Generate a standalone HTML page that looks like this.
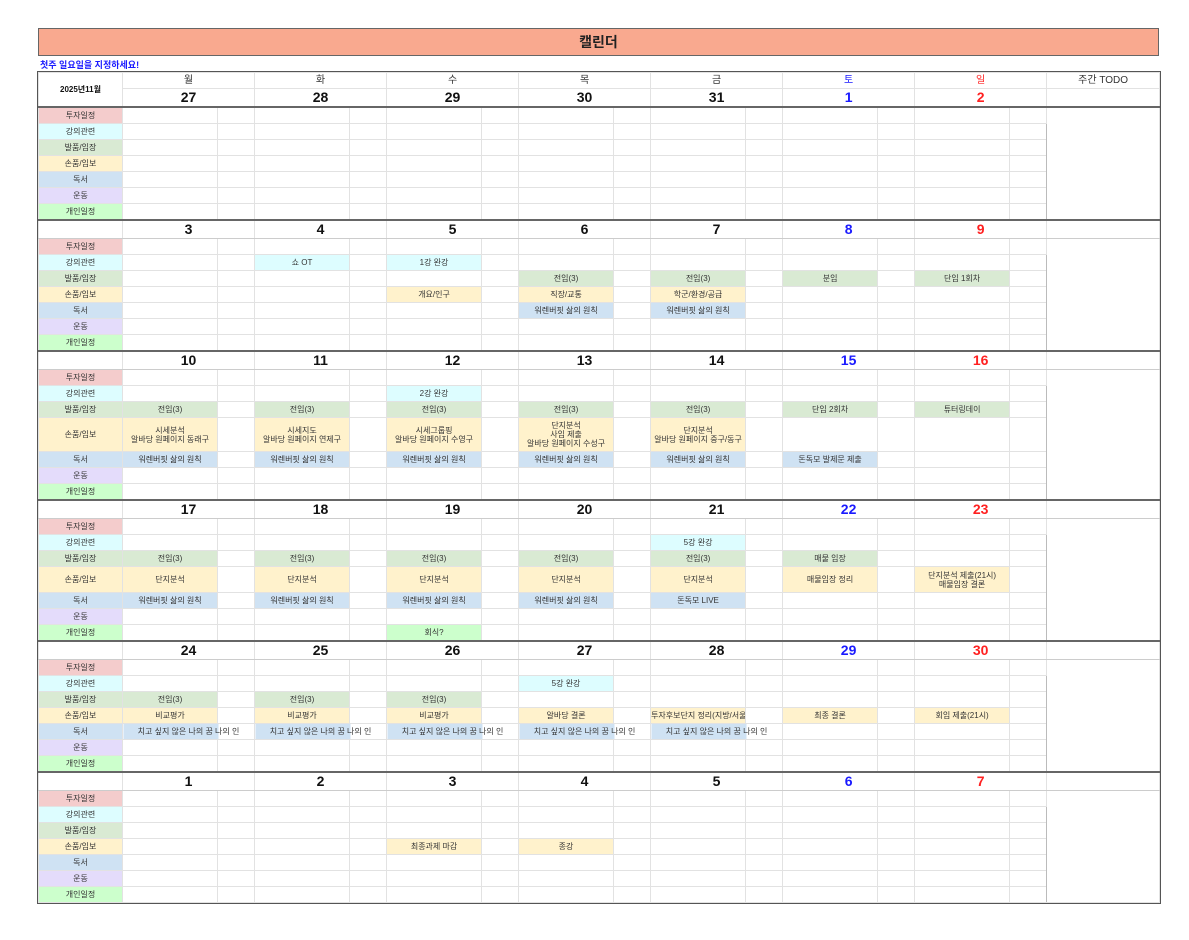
<!DOCTYPE html>
<html><head><meta charset="utf-8"><style>
body{margin:0;background:#fff;font-family:"Liberation Sans","Noto Sans CJK KR",sans-serif;width:1189px;height:940px;position:relative;overflow:hidden}
.title{position:absolute;left:38px;top:28px;width:1119px;height:26px;background:#f9a98f;border:1px solid #666;text-align:center;font-size:14px;font-weight:bold;line-height:26px;color:#222}
.sub{position:absolute;left:40px;top:58px;font-size:9px;font-weight:bold;color:#1a1aff}
table{position:absolute;left:38px;top:72px;border-collapse:collapse;table-layout:fixed;width:1121px;outline:1px solid #555}
td{border:1px solid #e2e2e2;padding:0;font-size:8px;line-height:9px;text-align:center;color:#333;overflow:hidden;white-space:nowrap;height:15px}
tr.d td{height:17px;font-size:14px;font-weight:bold;color:#111;border-top:2px solid #666;border-bottom:1px solid #ccc}
tr.h td{height:15px;font-size:10px;color:#333}
.b{color:#1a1aff!important}.r{color:#ff2020!important}
.a1{background:#f4cccc}.a2{background:#ddfdff}.a3{background:#d9ead3}.a4{background:#fff2cc}.a5{background:#cfe2f3}.a6{background:#e4dcfb}.a7{background:#ccffcc}
.todo{border-left:1px solid #bbb}
</style></head><body>
<div class="title">캘린더</div>
<div class="sub">첫주 일요일을 지정하세요!</div>
<table>
<colgroup><col style="width:84px"><col style="width:95px"><col style="width:37px"><col style="width:95px"><col style="width:37px"><col style="width:95px"><col style="width:37px"><col style="width:95px"><col style="width:37px"><col style="width:95px"><col style="width:37px"><col style="width:95px"><col style="width:37px"><col style="width:95px"><col style="width:37px"><col style="width:113px"></colgroup>
<tr class="h"><td rowspan="2" style="font-weight:bold;font-size:8px;color:#111">2025년11월</td><td colspan="2">월</td><td colspan="2">화</td><td colspan="2">수</td><td colspan="2">목</td><td colspan="2">금</td><td colspan="2" class="b">토</td><td colspan="2" class="r">일</td><td>주간 TODO</td></tr>
<tr class="d"><td colspan="2" style="border-top:1px solid #e2e2e2">27</td><td colspan="2" style="border-top:1px solid #e2e2e2">28</td><td colspan="2" style="border-top:1px solid #e2e2e2">29</td><td colspan="2" style="border-top:1px solid #e2e2e2">30</td><td colspan="2" style="border-top:1px solid #e2e2e2">31</td><td colspan="2" class="b" style="border-top:1px solid #e2e2e2">1</td><td colspan="2" class="r" style="border-top:1px solid #e2e2e2">2</td><td style="border-top:1px solid #e2e2e2"></td></tr>
<!-- week1 -->
<tr style="border-top:2px solid #666"><td class="a1">투자일정</td><td></td><td></td><td></td><td></td><td></td><td></td><td></td><td></td><td></td><td></td><td></td><td></td><td></td><td></td><td rowspan="7" class="todo"></td></tr>
<tr><td class="a2">강의관련</td><td></td><td></td><td></td><td></td><td></td><td></td><td></td><td></td><td></td><td></td><td></td><td></td><td></td><td></td></tr>
<tr><td class="a3">발품/임장</td><td></td><td></td><td></td><td></td><td></td><td></td><td></td><td></td><td></td><td></td><td></td><td></td><td></td><td></td></tr>
<tr><td class="a4">손품/임보</td><td></td><td></td><td></td><td></td><td></td><td></td><td></td><td></td><td></td><td></td><td></td><td></td><td></td><td></td></tr>
<tr><td class="a5">독서</td><td></td><td></td><td></td><td></td><td></td><td></td><td></td><td></td><td></td><td></td><td></td><td></td><td></td><td></td></tr>
<tr><td class="a6">운동</td><td></td><td></td><td></td><td></td><td></td><td></td><td></td><td></td><td></td><td></td><td></td><td></td><td></td><td></td></tr>
<tr><td class="a7">개인일정</td><td></td><td></td><td></td><td></td><td></td><td></td><td></td><td></td><td></td><td></td><td></td><td></td><td></td><td></td></tr>
<!-- week2 -->
<tr class="d"><td></td><td colspan="2">3</td><td colspan="2">4</td><td colspan="2">5</td><td colspan="2">6</td><td colspan="2">7</td><td colspan="2" class="b">8</td><td colspan="2" class="r">9</td><td></td></tr>
<tr><td class="a1">투자일정</td><td></td><td></td><td></td><td></td><td></td><td></td><td></td><td></td><td></td><td></td><td></td><td></td><td></td><td></td><td rowspan="7" class="todo"></td></tr>
<tr><td class="a2">강의관련</td><td></td><td></td><td class="a2">쇼 OT</td><td></td><td class="a2">1강 완강</td><td></td><td></td><td></td><td></td><td></td><td></td><td></td><td></td><td></td></tr>
<tr><td class="a3">발품/임장</td><td></td><td></td><td></td><td></td><td></td><td></td><td class="a3">전임(3)</td><td></td><td class="a3">전임(3)</td><td></td><td class="a3">분임</td><td></td><td class="a3">단임 1회차</td><td></td></tr>
<tr><td class="a4">손품/임보</td><td></td><td></td><td></td><td></td><td class="a4">개요/인구</td><td></td><td class="a4">직장/교통</td><td></td><td class="a4">학군/환경/공급</td><td></td><td></td><td></td><td></td><td></td></tr>
<tr><td class="a5">독서</td><td></td><td></td><td></td><td></td><td></td><td></td><td class="a5">워렌버핏 삶의 원칙</td><td></td><td class="a5">워렌버핏 삶의 원칙</td><td></td><td></td><td></td><td></td><td></td></tr>
<tr><td class="a6">운동</td><td></td><td></td><td></td><td></td><td></td><td></td><td></td><td></td><td></td><td></td><td></td><td></td><td></td><td></td></tr>
<tr><td class="a7">개인일정</td><td></td><td></td><td></td><td></td><td></td><td></td><td></td><td></td><td></td><td></td><td></td><td></td><td></td><td></td></tr>
<!-- week3 -->
<tr class="d"><td></td><td colspan="2">10</td><td colspan="2">11</td><td colspan="2">12</td><td colspan="2">13</td><td colspan="2">14</td><td colspan="2" class="b">15</td><td colspan="2" class="r">16</td><td></td></tr>
<tr><td class="a1">투자일정</td><td></td><td></td><td></td><td></td><td></td><td></td><td></td><td></td><td></td><td></td><td></td><td></td><td></td><td></td><td rowspan="7" class="todo"></td></tr>
<tr><td class="a2">강의관련</td><td></td><td></td><td></td><td></td><td class="a2">2강 완강</td><td></td><td></td><td></td><td></td><td></td><td></td><td></td><td></td><td></td></tr>
<tr><td class="a3">발품/임장</td><td class="a3">전임(3)</td><td></td><td class="a3">전임(3)</td><td></td><td class="a3">전임(3)</td><td></td><td class="a3">전임(3)</td><td></td><td class="a3">전임(3)</td><td></td><td class="a3">단임 2회차</td><td></td><td class="a3">튜터링데이</td><td></td></tr>
<tr><td class="a4" style="height:33px">손품/임보</td><td class="a4">시세분석<br>알바당 원페이지 동래구</td><td></td><td class="a4">시세지도<br>알바당 원페이지 연제구</td><td></td><td class="a4">시세그룹핑<br>알바당 원페이지 수영구</td><td></td><td class="a4">단지분석<br>사임 제출<br>알바당 원페이지 수성구</td><td></td><td class="a4">단지분석<br>알바당 원페이지 중구/동구</td><td></td><td></td><td></td><td></td><td></td></tr>
<tr><td class="a5">독서</td><td class="a5">워렌버핏 삶의 원칙</td><td></td><td class="a5">워렌버핏 삶의 원칙</td><td></td><td class="a5">워렌버핏 삶의 원칙</td><td></td><td class="a5">워렌버핏 삶의 원칙</td><td></td><td class="a5">워렌버핏 삶의 원칙</td><td></td><td class="a5">돈독모 발제문 제출</td><td></td><td></td><td></td></tr>
<tr><td class="a6">운동</td><td></td><td></td><td></td><td></td><td></td><td></td><td></td><td></td><td></td><td></td><td></td><td></td><td></td><td></td></tr>
<tr><td class="a7">개인일정</td><td></td><td></td><td></td><td></td><td></td><td></td><td></td><td></td><td></td><td></td><td></td><td></td><td></td><td></td></tr>
<!-- week4 -->
<tr class="d"><td></td><td colspan="2">17</td><td colspan="2">18</td><td colspan="2">19</td><td colspan="2">20</td><td colspan="2">21</td><td colspan="2" class="b">22</td><td colspan="2" class="r">23</td><td></td></tr>
<tr><td class="a1">투자일정</td><td></td><td></td><td></td><td></td><td></td><td></td><td></td><td></td><td></td><td></td><td></td><td></td><td></td><td></td><td rowspan="7" class="todo"></td></tr>
<tr><td class="a2">강의관련</td><td></td><td></td><td></td><td></td><td></td><td></td><td></td><td></td><td class="a2">5강 완강</td><td></td><td></td><td></td><td></td><td></td></tr>
<tr><td class="a3">발품/임장</td><td class="a3">전임(3)</td><td></td><td class="a3">전임(3)</td><td></td><td class="a3">전임(3)</td><td></td><td class="a3">전임(3)</td><td></td><td class="a3">전임(3)</td><td></td><td class="a3">매물 임장</td><td></td><td></td><td></td></tr>
<tr><td class="a4" style="height:25px">손품/임보</td><td class="a4">단지분석</td><td></td><td class="a4">단지분석</td><td></td><td class="a4">단지분석</td><td></td><td class="a4">단지분석</td><td></td><td class="a4">단지분석</td><td></td><td class="a4">매물임장 정리</td><td></td><td class="a4">단지분석 제출(21시)<br>매물임장 결론</td><td></td></tr>
<tr><td class="a5">독서</td><td class="a5">워렌버핏 삶의 원칙</td><td></td><td class="a5">워렌버핏 삶의 원칙</td><td></td><td class="a5">워렌버핏 삶의 원칙</td><td></td><td class="a5">워렌버핏 삶의 원칙</td><td></td><td class="a5">돈독모 LIVE</td><td></td><td></td><td></td><td></td><td></td></tr>
<tr><td class="a6">운동</td><td></td><td></td><td></td><td></td><td></td><td></td><td></td><td></td><td></td><td></td><td></td><td></td><td></td><td></td></tr>
<tr><td class="a7">개인일정</td><td></td><td></td><td></td><td></td><td class="a7">회식?</td><td></td><td></td><td></td><td></td><td></td><td></td><td></td><td></td><td></td></tr>
<!-- week5 -->
<tr class="d"><td></td><td colspan="2">24</td><td colspan="2">25</td><td colspan="2">26</td><td colspan="2">27</td><td colspan="2">28</td><td colspan="2" class="b">29</td><td colspan="2" class="r">30</td><td></td></tr>
<tr><td class="a1">투자일정</td><td></td><td></td><td></td><td></td><td></td><td></td><td></td><td></td><td></td><td></td><td></td><td></td><td></td><td></td><td rowspan="7" class="todo"></td></tr>
<tr><td class="a2">강의관련</td><td></td><td></td><td></td><td></td><td></td><td></td><td class="a2">5강 완강</td><td></td><td></td><td></td><td></td><td></td><td></td><td></td></tr>
<tr><td class="a3">발품/임장</td><td class="a3">전임(3)</td><td></td><td class="a3">전임(3)</td><td></td><td class="a3">전임(3)</td><td></td><td></td><td></td><td></td><td></td><td></td><td></td><td></td><td></td></tr>
<tr><td class="a4">손품/임보</td><td class="a4">비교평가</td><td></td><td class="a4">비교평가</td><td></td><td class="a4">비교평가</td><td></td><td class="a4">알바당 결론</td><td></td><td class="a4">투자후보단지 정리(지방/서울)</td><td></td><td class="a4">최종 결론</td><td></td><td class="a4">회임 제출(21시)</td><td></td></tr>
<tr><td class="a5">독서</td><td colspan="2" style="background:linear-gradient(90deg,#cfe2f3 95px,#fff 95px)">치고 싶지 않은 나의 꿈 나의 인</td><td colspan="2" style="background:linear-gradient(90deg,#cfe2f3 95px,#fff 95px)">치고 싶지 않은 나의 꿈 나의 인</td><td colspan="2" style="background:linear-gradient(90deg,#cfe2f3 95px,#fff 95px)">치고 싶지 않은 나의 꿈 나의 인</td><td colspan="2" style="background:linear-gradient(90deg,#cfe2f3 95px,#fff 95px)">치고 싶지 않은 나의 꿈 나의 인</td><td colspan="2" style="background:linear-gradient(90deg,#cfe2f3 95px,#fff 95px)">치고 싶지 않은 나의 꿈 나의 인</td><td></td><td></td><td></td><td></td></tr>
<tr><td class="a6">운동</td><td></td><td></td><td></td><td></td><td></td><td></td><td></td><td></td><td></td><td></td><td></td><td></td><td></td><td></td></tr>
<tr><td class="a7">개인일정</td><td></td><td></td><td></td><td></td><td></td><td></td><td></td><td></td><td></td><td></td><td></td><td></td><td></td><td></td></tr>
<!-- week6 -->
<tr class="d"><td></td><td colspan="2">1</td><td colspan="2">2</td><td colspan="2">3</td><td colspan="2">4</td><td colspan="2">5</td><td colspan="2" class="b">6</td><td colspan="2" class="r">7</td><td></td></tr>
<tr><td class="a1">투자일정</td><td></td><td></td><td></td><td></td><td></td><td></td><td></td><td></td><td></td><td></td><td></td><td></td><td></td><td></td><td rowspan="7" class="todo"></td></tr>
<tr><td class="a2">강의관련</td><td></td><td></td><td></td><td></td><td></td><td></td><td></td><td></td><td></td><td></td><td></td><td></td><td></td><td></td></tr>
<tr><td class="a3">발품/임장</td><td></td><td></td><td></td><td></td><td></td><td></td><td></td><td></td><td></td><td></td><td></td><td></td><td></td><td></td></tr>
<tr><td class="a4">손품/임보</td><td></td><td></td><td></td><td></td><td class="a4">최종과제 마감</td><td></td><td class="a4">종강</td><td></td><td></td><td></td><td></td><td></td><td></td><td></td></tr>
<tr><td class="a5">독서</td><td></td><td></td><td></td><td></td><td></td><td></td><td></td><td></td><td></td><td></td><td></td><td></td><td></td><td></td></tr>
<tr><td class="a6">운동</td><td></td><td></td><td></td><td></td><td></td><td></td><td></td><td></td><td></td><td></td><td></td><td></td><td></td><td></td></tr>
<tr><td class="a7">개인일정</td><td></td><td></td><td></td><td></td><td></td><td></td><td></td><td></td><td></td><td></td><td></td><td></td><td></td><td></td></tr>
</table>
</body></html>
